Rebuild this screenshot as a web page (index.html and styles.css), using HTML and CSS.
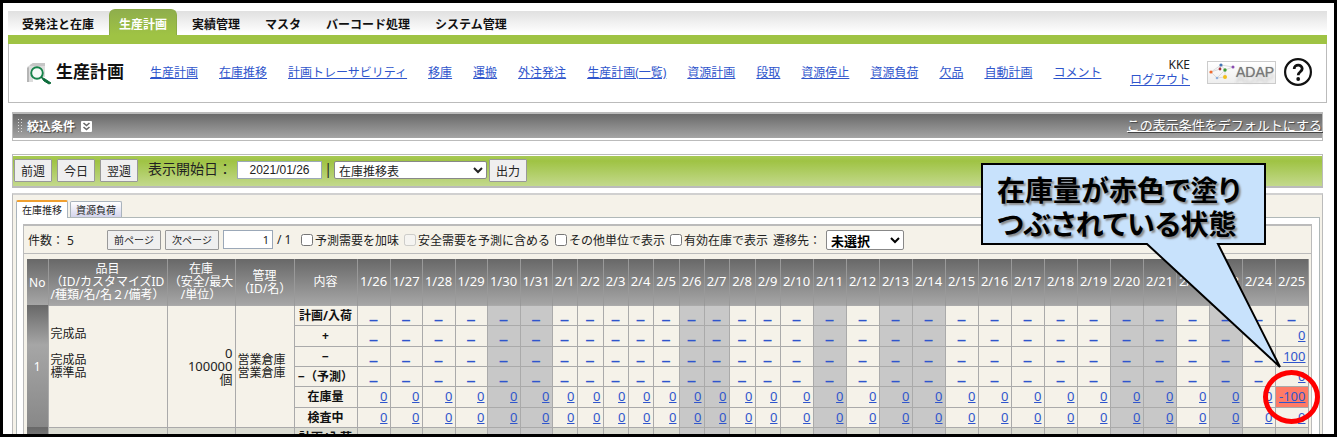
FILE: index.html
```html
<!DOCTYPE html>
<html lang="ja">
<head>
    <meta charset="UTF-8">
    <meta name="viewport" content="width=device-width, initial-scale=1.0">
    <title>生産計画 - 在庫推移</title>
    <link rel="stylesheet" href="styles.css">
</head>
<body>

    <div class="frame">
        <nav class="main-nav">
            <a href="#">受発注と在庫</a>
            <a href="#" class="active">生産計画</a>
            <a href="#">実績管理</a>
            <a href="#">マスタ</a>
            <a href="#">バーコード処理</a>
            <a href="#">システム管理</a>
        </nav>

        <header class="header">
            <svg class="page-icon" viewBox="0 0 25 22" aria-hidden="true">
                <path d="M3 2 L6 0 H18 V14 H6 V19 H0 V4 Z" fill="#dcdcdc"/>
                <path d="M0 5 V19 H2 V4 Z" fill="#b5b5b5"/>
                <path d="M3 2 L6 0 H18 V3 H3 Z" fill="#c6c6c6"/>
                <circle cx="10" cy="10" r="5.800" fill="#f4faf6" stroke="#16834a" stroke-width="1.900"/>
                <path d="M14 14 L18 16 L24 20 L22 21 L17 18 Z" fill="#0c6b3a" stroke="#0c6b3a" stroke-width="1"/>
            </svg>
            <h1>生産計画</h1>
            <nav class="sub-nav">
                <a href="#">生産計画</a>
                <a href="#">在庫推移</a>
                <a href="#">計画トレーサビリティ</a>
                <a href="#">移庫</a>
                <a href="#">運搬</a>
                <a href="#">外注発注</a>
                <a href="#">生産計画(一覧)</a>
                <a href="#">資源計画</a>
                <a href="#">段取</a>
                <a href="#">資源停止</a>
                <a href="#">資源負荷</a>
                <a href="#">欠品</a>
                <a href="#">自動計画</a>
                <a href="#">コメント</a>
            </nav>
            <div class="user">
                <span>KKE</span>
                <a href="#">ログアウト</a>
            </div>
            <a href="#" class="adap">
                <svg viewBox="0 0 28 20" aria-hidden="true">
                    <path d="M3 10 L13 3 L25 5 L17 8 L13 3 L12 7 L3 10 L9 16 L17 8 L17 15 L9 16" fill="none" stroke="#d4d4d4" stroke-width="0.800"/>
                    <circle cx="3" cy="10" r="1.600" fill="#ef6b2f"/>
                    <circle cx="13" cy="3" r="1.600" fill="#4576b5"/>
                    <circle cx="25" cy="5" r="1.500" fill="#8a4bb0"/>
                    <circle cx="12" cy="7" r="1.400" fill="#a8353f"/>
                    <circle cx="17" cy="8" r="1.700" fill="#3f9b35"/>
                    <circle cx="9" cy="16" r="1.300" fill="#8fb0dd"/>
                    <circle cx="17" cy="15" r="2" fill="#f2bf1d"/>
                </svg>
                <span>ADAP</span>
            </a>
            <a href="#" class="help" aria-label="ヘルプ">
                <svg viewBox="0 0 28 28" aria-hidden="true">
                    <circle cx="14" cy="14" r="12.900" fill="#fff" stroke="#111" stroke-width="2.200"/>
                    <path d="M10.200 11 C10.200 6 18.200 6 18.200 10.800 C18.200 13.800 14.200 13.800 14.200 17.200" fill="none" stroke="#111" stroke-width="2.800"/>
                    <circle cx="14.200" cy="21" r="1.900" fill="#111"/>
                </svg>
            </a>
        </header>

        <section class="filter">
            <div class="filter-bar">
                <span class="grip"></span>
                <strong>絞込条件</strong>
                <button type="button" class="expand" aria-label="開く">
                    <svg viewBox="0 0 11 11" aria-hidden="true">
                        <path d="M2.500 2 L5.500 4.500 L8.500 2 M2.500 6 L5.500 8.500 L8.500 6" fill="none" stroke="#666" stroke-width="1.600"/>
                    </svg>
                </button>
                <a href="#">この表示条件をデフォルトにする</a>
            </div>
        </section>

        <form class="date-bar">
            <button type="button">前週</button>
            <button type="button">今日</button>
            <button type="button">翌週</button>
            <label for="startDate">表示開始日：</label>
            <input type="text" id="startDate" value="2021/01/26">
            <span class="divider">|</span>
            <select class="report" aria-label="帳票">
                <option>在庫推移表</option>
            </select>
            <button type="button">出力</button>
        </form>

        <main class="panel">
            <div class="tabs">
                <button type="button" class="tab active">在庫推移</button>
                <button type="button" class="tab">資源負荷</button>
            </div>

            <div class="tab-body">
                <div class="stock">
                    <form class="toolbar">
                        <span class="count">件数： 5</span>
                        <button type="button">前ページ</button>
                        <button type="button">次ページ</button>
                        <input type="text" class="page" value="1" aria-label="ページ">
                        <span class="pages">/ 1</span>
                        <label><input type="checkbox">予測需要を加味</label>
                        <label><input type="checkbox" disabled>安全需要を予測に含める</label>
                        <label><input type="checkbox">その他単位で表示</label>
                        <label><input type="checkbox">有効在庫で表示</label>
                        <label for="jump">遷移先：</label>
                        <select id="jump" class="jump">
                            <option>未選択</option>
                        </select>
                    </form>

                    <div class="table-wrap">
                        <table>
                            <colgroup id="cols">
                                <col class="c-no">
                                <col class="c-item">
                                <col class="c-stock">
                                <col class="c-admin">
                                <col class="c-kind">
                            </colgroup>
                            <thead>
                                <tr id="head">
                                    <th>No</th>
                                    <th>品目<br>（ID/カスタマイズID<br>/種類/名/名２/備考）</th>
                                    <th>在庫<br>（安全/最大<br>/単位）</th>
                                    <th>管理<br>（ID/名）</th>
                                    <th>内容</th>
                                </tr>
                            </thead>
                            <tbody id="body"></tbody>
                        </table>
                    </div>
                </div>
            </div>
        </main>

        <div class="callout">
            <svg viewBox="0 0 304 208" aria-hidden="true">
                <path d="M1 1 H284 V81 H237 L299 204 L166 81 H1 Z" fill="#c8e2fc" stroke="#000" stroke-width="2"/>
            </svg>
            <p>在庫量が赤色で塗り<br>つぶされている状態</p>
        </div>
    </div>

    <script src="script.js"></script>
</body>
</html>
```
FILE: styles.css
```css
* {
    box-sizing: border-box;
}

body {
    margin: 0;
    font-family: "Noto Sans", "Noto Sans CJK JP", sans-serif;
    font-size: 12px;
    color: #222;
    background-color: #fff;
}

a {
    color: #2f55cc;
}

button, input, select {
    font-family: inherit;
    font-size: 12px;
    color: #222;
    margin: 0;
}

.frame {
    position: relative;
    height: 100vh;
    overflow: hidden;
    border: 3px solid #000;
    padding: 8px 7px 0 5px;
}

/* Main menu */
.main-nav {
    display: flex;
    gap: 5px;
    height: 33px;
    padding-left: 4px;
    background: linear-gradient(#e0e0e0, #fff 22px);
    border-bottom: 9px solid #9fc344;
}

.main-nav a {
    height: 26px;
    margin-top: -2px;
    padding: 0 10px;
    line-height: 30px;
    font-family: "Noto Sans CJK JP", sans-serif;
    font-size: 12px;
    font-weight: bold;
    color: #111;
    text-decoration: none;
}

.main-nav a.active {
    padding: 0 9px;
    color: #fff;
    line-height: 28px;
    background: linear-gradient(#8fae4c, #9fc344);
    border: 1px solid #8bab45;
    border-bottom: 0;
    border-radius: 6px 6px 0 0;
}

/* Header */
.header {
    display: flex;
    align-items: center;
    height: 59px;
    padding: 0 14px 2px 18px;
    border: 1px solid #bbb;
    border-top: 0;
}

.page-icon {
    width: 25px;
    height: 22px;
    margin-top: 3px;
}

.header h1 {
    margin: 0 26px 0 4px;
    font-size: 17px;
    line-height: 20px;
    color: #111;
}

.sub-nav {
    display: flex;
    flex: 1;
    gap: 21px;
    white-space: nowrap;
}

.user {
    display: flex;
    flex-direction: column;
    align-items: flex-end;
    line-height: 15px;
    margin-right: 17px;
}

.adap {
    display: flex;
    align-items: center;
    width: 69px;
    height: 23px;
    margin-right: 8px;
    border: 1px solid #ccc;
    background: linear-gradient(#fff, #eee);
    font-family: "Liberation Sans", sans-serif;
    font-size: 14px;
    color: #777;
    text-decoration: none;
    text-shadow: 0 0 1px #999, 0 6px 3px #ccc;
}

.adap svg {
    width: 28px;
    height: 20px;
}

.help, .help svg {
    display: block;
    width: 28px;
    height: 28px;
}

/* Filter bar */
.filter {
    margin: 9px 4px 0;
    border: 1px solid #bbb;
    border-top-width: 2px;
    padding-bottom: 2px;
}

.filter-bar {
    display: flex;
    align-items: center;
    height: 24px;
    padding-left: 4px;
    color: #fff;
    background: linear-gradient(#6a6a6a, #a4a4a4);
    text-shadow: 1px 1px 1px #444;
}

.filter-bar a {
    margin-left: auto;
    color: #fff;
    font-size: 13px;
    line-height: 22px;
    margin-bottom: 2px;
}

.grip {
    width: 5px;
    height: 16px;
    margin-right: 5px;
    background: radial-gradient(circle, #ddd 1px, transparent 1px) 0 0 / 3px 3px;
}

.filter-bar strong {
    font-size: 12px;
}

.expand {
    width: 11px;
    height: 11px;
    margin-left: 6px;
    padding: 0;
    border: 0;
    border-radius: 1px;
    background-color: #fff;
}

.expand svg {
    display: block;
}

/* Date bar */
.date-bar {
    display: flex;
    align-items: flex-start;
    height: 34px;
    margin: 13px 4px 0;
    padding: 4px 1px 0;
    border: 1px solid #bbb;
    border-bottom-width: 2px;
    background: linear-gradient(#a9cb58, #9fc344 6px, #c3d98c) padding-box;
    box-shadow: inset 0 1px #fff;
}

.date-bar button {
    width: 38px;
    height: 23px;
    margin-right: 5px;
    padding: 0;
    border: 1px solid #999;
    border-radius: 1px;
    background-color: #efefef;
}

.date-bar label {
    margin: 0 5px;
    font-size: 14px;
    line-height: 20px;
}

.date-bar input {
    width: 85px;
    height: 18px;
    margin-top: 2px;
    padding: 0;
    border: 1px solid #9ba8b8;
    font-family: "Liberation Sans", sans-serif;
    text-align: center;
}

.divider {
    width: 12px;
    font-size: 14px;
    line-height: 20px;
    text-align: center;
}

.report {
    width: 153px;
    height: 18px;
    margin: 2px 2px 0 0;
    padding: 0;
    border: 1px solid #888;
    border-radius: 2px;
    background-color: #fff;
}

/* Tabs */
.panel {
    margin: 5px 4px 0;
    padding: 5px 2px 0 3px;
    border: 1px solid #bbb;
    border-top: 2px solid #d0d0d0;
    background-color: #f5f2e9;
}

.tabs {
    display: flex;
    align-items: flex-end;
    gap: 2px;
    height: 17px;
}

.tab {
    height: 16px;
    padding: 0 5px;
    border: 1px solid #a9b3bd;
    border-bottom: 0;
    border-radius: 2px 2px 0 0;
    font-size: 10px;
    line-height: 14px;
    background: linear-gradient(#fff, #d4d4ec);
}

.tab.active {
    height: 18px;
    margin-bottom: -1px;
    border-top: 2px solid #f0a030;
    background: #fff;
}

.tab-body {
    padding: 6px 7px 0 6px;
    border: 1px solid #b0b8b8;
    background-color: #fff;
}

.stock {
    border: 1px solid #bbb;
    border-top-width: 2px;
    background-color: #f5f2e9;
}

/* Toolbar */
.toolbar {
    display: flex;
    align-items: center;
    height: 28px;
    padding-left: 4px;
    border-bottom: 1px solid #bbb;
    white-space: nowrap;
}

.count {
    width: 79px;
}

.toolbar button {
    width: 54px;
    height: 20px;
    margin-right: 4px;
    padding: 0;
    border: 1px solid #999;
    border-radius: 1px;
    font-size: 10px;
    background-color: #efefef;
}

.page {
    width: 50px;
    height: 19px;
    padding: 0 3px;
    border: 1px solid #9ba8b8;
    font-size: 11px;
    text-align: right;
}

.pages {
    width: 28px;
    padding-left: 4px;
}

.toolbar label {
    display: flex;
    align-items: center;
    margin-right: 5px;
}

.toolbar input[type="checkbox"] {
    width: 12px;
    height: 12px;
    margin-right: 2px;
}

.jump {
    width: 78px;
    height: 20px;
    padding: 0;
    border: 1px solid #888;
    border-radius: 2px;
    font-size: 13px;
    font-weight: bold;
    color: #000;
    background-color: #fff;
}

/* Stock table */
.table-wrap {
    padding: 5px 3px 0;
}

table {
    width: 100%;
    table-layout: fixed;
    border-collapse: collapse;
}

.c-no { width: 21px; }
.c-item { width: 119px; }
.c-stock { width: 68px; }
.c-admin { width: 59px; }
.c-kind { width: 63px; }
.c-25 { width: 25px; }
.c-26 { width: 26px; }
.c-32 { width: 32px; }
.c-33 { width: 33px; }

thead {
    background: linear-gradient(#686868, #a6a6a6);
}

thead th {
    height: 46px;
    padding: 0;
    border-right: 1px solid #999;
    font-weight: normal;
    line-height: 13px;
    color: #fff;
    white-space: nowrap;
}

thead .day {
    font-size: 13px;
}

tbody td, tbody th {
    height: 20px;
    padding: 0 2px;
    border: 1px solid #aaa;
    line-height: 13px;
}

tbody tr:nth-child(3n+2) td {
    height: 21px;
}

tbody .no {
    padding: 0;
    border: 0;
    color: #fff;
    text-align: center;
    background: linear-gradient(#686868, #a6a6a6 40px, #888);
}

tbody .kind {
    padding: 0;
    color: #111;
    white-space: nowrap;
}

.num {
    font-size: 13px;
    text-align: right;
}

.dash {
    text-align: center;
    vertical-align: top;
}

.dash a {
    font-family: "DejaVu Sans", sans-serif;
    font-size: 16px;
    font-weight: bold;
    text-decoration: none;
}

.off {
    background-color: #c8c8c8;
}

.even {
    background-color: #dbdcd2;
}

.short {
    position: relative;
    background-color: #ff7b66;
}

/* Marker round the short cell */
.ring {
    position: absolute;
    top: -17px;
    left: -13px;
    width: 57px;
    height: 54px;
    border: 5px solid #f00;
    border-radius: 50%;
    pointer-events: none;
}

/* Callout */
.callout {
    position: absolute;
    top: 160px;
    right: 49px;
    width: 304px;
}

.callout svg {
    display: block;
    width: 304px;
    height: 208px;
}

.callout p {
    position: absolute;
    top: 9px;
    left: 16px;
    margin: 0;
    font-family: "Noto Sans CJK JP", sans-serif;
    font-size: 28px;
    font-weight: bold;
    font-feature-settings: "palt";
    line-height: 34px;
    color: #000;
    white-space: nowrap;
    text-shadow: 2px 2px 2px #888;
}
```
FILE: script.js
```javascript
const days = [
    '1/26', '1/27', '1/28', '1/29', '1/30', '1/31',
    '2/1', '2/2', '2/3', '2/4', '2/5', '2/6', '2/7', '2/8', '2/9',
    '2/10', '2/11', '2/12', '2/13', '2/14', '2/15', '2/16', '2/17', '2/18',
    '2/19', '2/20', '2/21', '2/22', '2/23', '2/24', '2/25'
];
const holidays = ['1/30', '1/31', '2/6', '2/7', '2/11', '2/13', '2/14', '2/20', '2/21', '2/23'];
const widths = [33, 32, 33, 32, 33, 32, 25, 26, 25, 25, 26, 25, 25, 26, 25];

const kinds = [
    { name: '計画/入荷', value: '_', last: '_' },
    { name: '+', value: '_', last: '0' },
    { name: '−', value: '_', last: '100' },
    { name: '−（予測）', value: '_', last: '0' },
    { name: '在庫量', value: '0', last: '-100' },
    { name: '検査中', value: '0', last: '0' }
];

const items = [
    { no: 1, item: '完成品<br><br>完成品<br>標準品<br><br><br>', stock: '0<br>100000<br>個', admin: '営業倉庫<br>営業倉庫' },
    { no: 2, item: '', stock: '', admin: '' }
];

// Columns and header
days.forEach((day, i) => {
    document.getElementById('cols').insertAdjacentHTML('beforeend', `<col class="c-${widths[i] || 33}">`);
    document.getElementById('head').insertAdjacentHTML('beforeend', `<th class="day">${day}</th>`);
});

function dayCell(kind, day, i) {
    const text = i === days.length - 1 ? kind.last : kind.value;
    const classes = [text === '_' ? 'dash' : 'num'];
    let ring = '';
    if (holidays.includes(day)) classes.push('off');
    if (Number(text) < 0) {
        classes.push('short');
        ring = '<span class="ring"></span>';
    }
    return `<td class="${classes.join(' ')}"><a href="#">${text}</a>${ring}</td>`;
}

let html = '';
items.forEach((item, n) => {
    // Only the first item has stock figures
    const rows = n === 0 ? kinds : kinds.slice(0, 1);
    rows.forEach((kind, r) => {
        html += `<tr class="${n % 2 ? 'even' : ''}">`;
        if (r === 0) {
            const span = rows.length;
            html += `<td class="no" rowspan="${span}">${n === 0 ? item.no : ''}</td>
                <td rowspan="${span}">${item.item}</td>
                <td class="num" rowspan="${span}">${item.stock}</td>
                <td rowspan="${span}">${item.admin}</td>`;
        }
        html += `<th class="kind">${kind.name}</th>`;
        html += days.map((day, i) => dayCell(kind, day, i)).join('');
        html += '</tr>';
    });
});
document.getElementById('body').innerHTML = html;
```
